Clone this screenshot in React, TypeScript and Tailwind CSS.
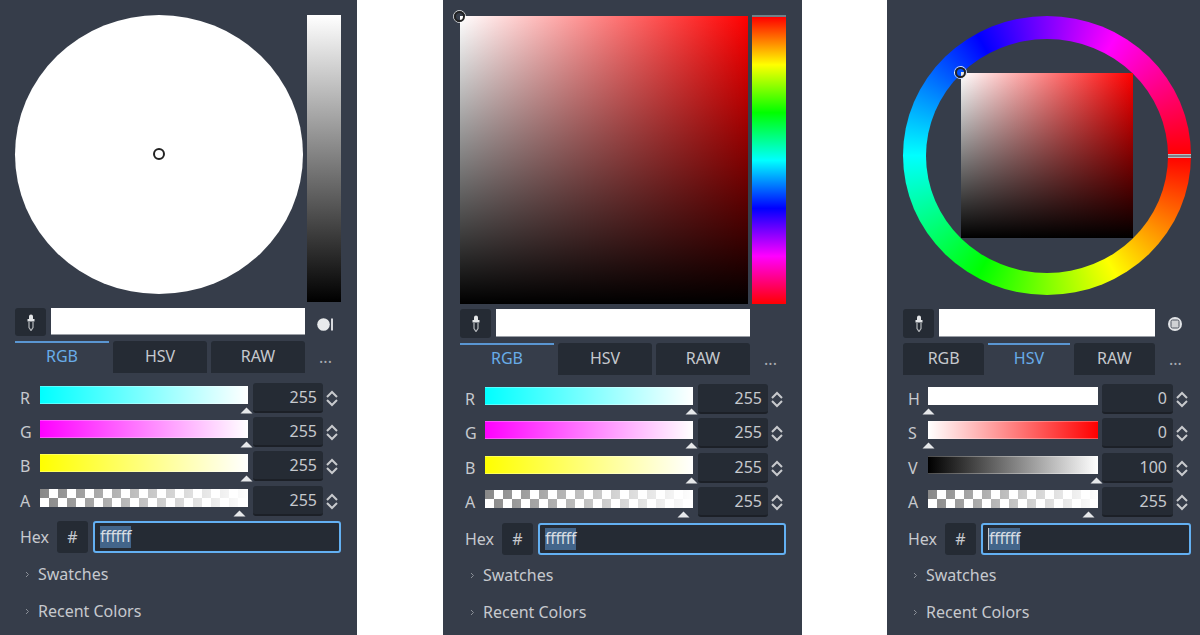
import type { ReactNode } from "react";

const hueGradient = "bg-[linear-gradient(to_bottom,#f00,#ff0,#0f0,#0ff,#00f,#f0f,#f00)]";

const Cursor = ({ className }: { className: string }) => (
  <div className={`absolute rounded-full border border-white/80 ${className}`}>
    <div className="w-full h-full rounded-full border-2 border-[#222222]" />
  </div>
);

const Dropper = () => (
  <svg width="8" height="17" viewBox="0 0 8 17">
    <path d="M2 5V2.500a2 2 0 0 1 4 0V5h1.500v2.500H.5V5z" fill="#e4e6e8" />
    <path d="M2 8v5.500L4 16.500l2-3V8" fill="none" stroke="#b4b7bb" strokeWidth="1.200" />
  </svg>
);

const Toolbar = ({
  swatch,
  top,
  icon,
  btnH = "h-[29px]",
  swatchH = "h-[28px]",
}: {
  swatch: string;
  top: string;
  icon: ReactNode;
  btnH?: string;
  swatchH?: string;
}) => (
  <div className={`flex items-start ${top}`}>
    <div className={`w-[31px] rounded-[3px] bg-[#252b34] flex items-center justify-center ${btnH}`}>
      <Dropper />
    </div>
    <div className={`ml-[5px] bg-white border-b border-[#9a9ea5] ${swatch} ${swatchH}`} />
    <div className="w-[40px] h-[29px] flex items-center justify-center">{icon}</div>
  </div>
);

const Tabs = ({ active, tabW, top }: { active: string; tabW: string; top: string }) => (
  <div className={`flex gap-[4px] h-[32px] text-[16px] ${top}`}>
    {["RGB", "HSV", "RAW"].map((t) =>
      t === active ? (
        <div key={t} className={`${tabW} border-t-2 border-[#5a96d2] pb-[4px] text-[#68ace8] flex items-center justify-center`}>
          {t}
        </div>
      ) : (
        <div key={t} className={`${tabW} rounded-t-[3px] bg-[#252b34] pb-[2px] text-[#c6c9ce] flex items-center justify-center`}>
          {t}
        </div>
      ),
    )}
    <div className="w-[33px] text-center text-[#a8abb1] leading-[32px]">...</div>
  </div>
);

const Triangle = ({ className }: { className: string }) => (
  <svg className={`absolute top-[21px] ${className}`} width="13" height="7" viewBox="0 0 13 7">
    <path d="M6.500 0.500L12.500 6.500H0.500z" fill="#e6e8ea" />
  </svg>
);

const SpinArrows = () => (
  <svg className="ml-[3px] mt-[7px]" width="12" height="17" viewBox="0 0 12 17" fill="none" stroke="#c8cacd" strokeWidth="2">
    <path d="M1 7l5-5 5 5" />
    <path d="M1 10l5 5 5-5" />
  </svg>
);

const SliderRow = ({
  label,
  value,
  bar,
  barW,
  boxW,
  boxGap,
  tri,
  gap = "mb-[4.330px]",
}: {
  label: string;
  value: string;
  bar: string;
  barW: string;
  boxW: string;
  boxGap: string;
  tri: string;
  gap?: string;
}) => (
  <div className={`flex items-start h-[30px] ${gap}`}>
    <div className="w-[25px] pl-[5px] leading-[30px] text-[#c6c9ce]">{label}</div>
    <div className={`relative mt-[3px] h-[18px] ${barW}`}>
      <div className={`h-full ${bar}`} />
      <Triangle className={tri} />
    </div>
    <div className={`${boxGap} ${boxW} h-[30px] rounded-[3px] bg-[#252b34] border-b-2 border-[#1c2027] text-right pr-[6px] leading-[28px] text-[#c6c9ce]`}>
      {value}
    </div>
    <SpinArrows />
  </div>
);

const HexRow = ({ inputW, caret }: { inputW: string; caret?: boolean }) => (
  <div className="flex items-center h-[32px]">
    <div className="w-[42px] pl-[5px] text-[#c6c9ce]">Hex</div>
    <div className="w-[31px] h-[32px] rounded-[3px] bg-[#252b34] flex items-center justify-center text-[#c6c9ce]">#</div>
    <div className={`ml-[5px] h-[32px] rounded-[3px] bg-[#252b34] border-2 border-[#63b0f2] pl-[5px] flex items-center ${inputW}`}>
      <span className={`bg-[#43658a] text-[#d8dde2] h-[22px] leading-[21px] tracking-[-0.300px] ${caret ? "border-l border-[#c6c9ce]" : ""}`}>
        ffffff
      </span>
    </div>
  </div>
);

const Section = ({ label }: { label: string }) => (
  <div className="flex items-center h-[37px] text-[#c6c9ce]">
    <svg className="ml-[10px]" width="13" height="9" viewBox="0 0 13 9" fill="none" stroke="#8a8f97" strokeWidth="1">
      <path d="M1 2l2.500 2.500L1 7" />
    </svg>
    <span>{label}</span>
  </div>
);

const checker =
  "bg-[linear-gradient(to_right,transparent,#fff),conic-gradient(#fff_25%,#888_0_50%,#fff_0_75%,#888_0)] bg-[size:100%_100%,18px_18px]";
const cyanBar = "border-y border-white/30 bg-[linear-gradient(to_right,#0ff,#fff)]";
const pinkBar = "border-y border-white/30 bg-[linear-gradient(to_right,#f0f,#fff)]";
const yellowBar = "border-y border-white/30 bg-[linear-gradient(to_right,#ff0,#fff)]";

const CircleIcon = () => (
  <svg className="mt-[3px]" width="16" height="13" viewBox="0 0 16 13">
    <circle cx="6.500" cy="6.500" r="6.300" fill="#e8eaec" />
    <rect x="14" y="0.500" width="2" height="12" fill="#d8dade" />
  </svg>
);

const RingIcon = () => (
  <svg className="mt-[1px]" width="14" height="14" viewBox="0 0 14 14">
    <circle cx="7" cy="7" r="7" fill="#e2e4e7" />
    <rect x="3" y="3" width="8" height="8" rx="1.500" fill="#cfd1d4" stroke="#4f5560" strokeWidth="1" />
  </svg>
);

export default function App() {
  return (
    <div className="flex w-[1200px] h-[635px] overflow-hidden bg-white text-[16px] font-['Noto_Sans',sans-serif]">
      {/* disc + value bar */}
      <div className="w-[357px] h-full bg-[#363d4a] pl-[15px] pt-[15px]">
        <div className="flex gap-[4px] h-[288px]">
          <div className="relative w-[288px] h-[279px] rounded-[50%] bg-white">
            <Cursor className="w-[14px] h-[14px] left-[137px] top-[132px]" />
          </div>
          <div className="w-[34px] h-[287px] bg-[linear-gradient(to_bottom,#fff,#000)]" />
        </div>
        <Toolbar swatch="w-[254px]" top="mt-[5px]" icon={<CircleIcon />} btnH="h-[28px]" swatchH="h-[27px]" />
        <Tabs active="RGB" tabW="w-[94px]" top="mt-[4px]" />
        <div className="mt-[9.670px]">
          <SliderRow label="R" value="255" bar={cyanBar} barW="w-[208px]" boxW="w-[70px]" boxGap="ml-[5px]" tri="right-[-5px]" />
          <SliderRow label="G" value="255" bar={pinkBar} barW="w-[208px]" boxW="w-[70px]" boxGap="ml-[5px]" tri="right-[-5px]" />
          <SliderRow label="B" value="255" bar={yellowBar} barW="w-[208px]" boxW="w-[70px]" boxGap="ml-[5px]" tri="right-[-5px]" />
          <SliderRow label="A" value="255" bar={checker} barW="w-[208px]" boxW="w-[70px]" boxGap="ml-[5px]" tri="right-[2px]" gap="mb-[5.330px]" />
        </div>
        <HexRow inputW="w-[248px]" />
        <div className="mt-[3px]">
          <Section label="Swatches" />
          <Section label="Recent Colors" />
        </div>
      </div>

      <div className="w-[86px]" />

      {/* square + hue bar */}
      <div className="w-[359px] h-full bg-[#363d4a] pl-[17px] pt-[16px]">
        <div className="flex gap-[4px] h-[288px]">
          <div className="relative w-[288px] h-[288px] bg-[linear-gradient(to_top,#000,transparent),linear-gradient(to_right,#fff,#f00)]">
            <Cursor className="w-[13px] h-[13px] left-[-7px] top-[-6px]" />
          </div>
          <div className={`-mt-px w-[34px] h-[289px] border-t-2 border-[#6f8088] ${hueGradient}`} />
        </div>
        <Toolbar swatch="w-[254px]" top="mt-[5px]" icon={null} />
        <Tabs active="RGB" tabW="w-[94px]" top="mt-[5px]" />
        <div className="mt-[9px]">
          <SliderRow label="R" value="255" bar={cyanBar} barW="w-[208px]" boxW="w-[70px]" boxGap="ml-[5px]" tri="right-[-5px]" />
          <SliderRow label="G" value="255" bar={pinkBar} barW="w-[208px]" boxW="w-[70px]" boxGap="ml-[5px]" tri="right-[-5px]" />
          <SliderRow label="B" value="255" bar={yellowBar} barW="w-[208px]" boxW="w-[70px]" boxGap="ml-[5px]" tri="right-[-5px]" />
          <SliderRow label="A" value="255" bar={checker} barW="w-[208px]" boxW="w-[70px]" boxGap="ml-[5px]" tri="right-[3px]" gap="mb-[6px]" />
        </div>
        <HexRow inputW="w-[248px]" />
        <div className="mt-[2px]">
          <Section label="Swatches" />
          <Section label="Recent Colors" />
        </div>
      </div>

      <div className="w-[85px]" />

      {/* wheel */}
      <div className="w-[313px] h-full bg-[#363d4a] pl-[16px] pt-[16px]">
        <div className="relative w-[288px] h-[279px] rounded-[50%] bg-[conic-gradient(from_90deg,#f00,#ff0,#0f0,#0ff,#00f,#f0f,#f00)] flex items-center justify-center">
          <div className="w-[242px] h-[234px] rounded-[50%] bg-[#363d4a] flex items-center justify-center">
            <div className="relative w-[172px] h-[165px] bg-[linear-gradient(to_top,#000,transparent),linear-gradient(to_right,#fff,#f00)]">
              <Cursor className="w-[13px] h-[13px] left-[-7px] top-[-7px] bg-[conic-gradient(#0050ff_0_25%,#e8e8e8_0_50%,#0050ff_0)]" />
            </div>
          </div>
          <div className="absolute right-0 top-[138px] w-[23px] h-[4px] border-y border-[#b9bcc0] bg-[#7d7f85]" />
        </div>
        <Toolbar swatch="w-[216px]" top="mt-[14px]" icon={<RingIcon />} />
        <Tabs active="HSV" tabW="w-[81.330px]" top="mt-[5px]" />
        <div className="mt-[9px]">
          <SliderRow label="H" value="0" bar="border-y border-white/30 bg-white" barW="w-[170px]" boxW="w-[71px]" boxGap="ml-[4px]" tri="left-[-6px]" />
          <SliderRow label="S" value="0" bar="border-y border-white/30 bg-[linear-gradient(to_right,#fff,#f00)]" barW="w-[170px]" boxW="w-[71px]" boxGap="ml-[4px]" tri="left-[-6px]" />
          <SliderRow label="V" value="100" bar="border-y border-white/30 bg-[linear-gradient(to_right,#000,#fff)]" barW="w-[170px]" boxW="w-[71px]" boxGap="ml-[4px]" tri="right-[-5px]" />
          <SliderRow label="A" value="255" bar={checker} barW="w-[170px]" boxW="w-[71px]" boxGap="ml-[4px]" tri="right-[3px]" gap="mb-[6px]" />
        </div>
        <HexRow inputW="w-[210px]" caret />
        <div className="mt-[2px]">
          <Section label="Swatches" />
          <Section label="Recent Colors" />
        </div>
      </div>
    </div>
  );
}
